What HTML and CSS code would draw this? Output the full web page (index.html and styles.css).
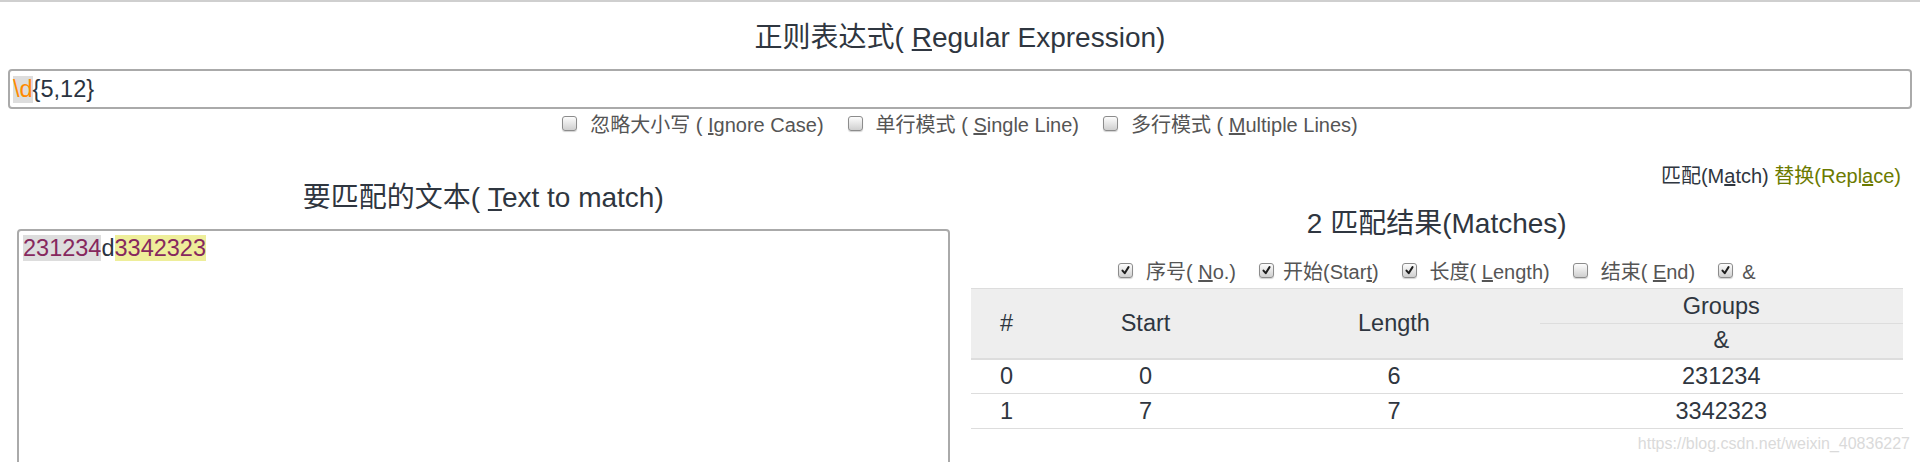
FILE: index.html
```html
<!DOCTYPE html>
<html lang="zh">
<head>
<meta charset="utf-8">
<title>正则表达式</title>
<link rel="stylesheet" href="styles.css">
</head>
<body>
<div class="page">
  <h1 class="title title-main">正则表达式( <u>R</u>egular Expression)</h1>
  <div class="regex-input"><span class="tok-esc">\d</span><span class="tok-q">{5,12}</span></div>
  <div class="options">
    <label class="opt"><span class="cb"></span><span>忽略大小写 ( <u>I</u>gnore Case)</span></label>
    <label class="opt"><span class="cb"></span><span>单行模式 ( <u>S</u>ingle Line)</span></label>
    <label class="opt"><span class="cb"></span><span>多行模式 ( <u>M</u>ultiple Lines)</span></label>
  </div>
  <div class="columns">
    <section class="col-left">
      <h2 class="title title-left">要匹配的文本( <u>T</u>ext to match)</h2>
      <div class="textbox"><span class="m m0">231234</span><span class="plain">d</span><span class="m m1">3342323</span></div>
    </section>
    <section class="col-right">
      <div class="modes"><span class="mode mode-match">匹配(M<u>a</u>tch)</span> <span class="mode mode-replace">替换(Repl<u>a</u>ce)</span></div>
      <h2 class="title title-right">2 匹配结果(Matches)</h2>
      <div class="options options-sm">
        <label class="opt"><span class="cb checked"><svg viewBox="0 0 15 15"><path d="M4 7.6 L6.6 10.6 L11 3.6"/></svg></span><span>序号( <u>N</u>o.)</span></label>
        <label class="opt opt-tight"><span class="cb checked"><svg viewBox="0 0 15 15"><path d="M4 7.6 L6.6 10.6 L11 3.6"/></svg></span><span>开始(Star<u>t</u>)</span></label>
        <label class="opt"><span class="cb checked"><svg viewBox="0 0 15 15"><path d="M4 7.6 L6.6 10.6 L11 3.6"/></svg></span><span>长度( <u>L</u>ength)</span></label>
        <label class="opt"><span class="cb"></span><span>结束( <u>E</u>nd)</span></label>
        <label class="opt opt-tight"><span class="cb checked"><svg viewBox="0 0 15 15"><path d="M4 7.6 L6.6 10.6 L11 3.6"/></svg></span><span>&amp;</span></label>
      </div>
      <table class="results">
        <colgroup>
          <col class="c-no"><col class="c-start"><col class="c-len"><col class="c-grp">
        </colgroup>
        <thead>
          <tr><th rowspan="2">#</th><th rowspan="2">Start</th><th rowspan="2">Length</th><th class="grp">Groups</th></tr>
          <tr><th class="amp">&amp;</th></tr>
        </thead>
        <tbody>
          <tr><td>0</td><td>0</td><td>6</td><td>231234</td></tr>
          <tr><td>1</td><td>7</td><td>7</td><td>3342323</td></tr>
        </tbody>
      </table>
    </section>
  </div>
  <div class="watermark">https://blog.csdn.net/weixin_40836227</div>
</div>
</body>
</html>
```

FILE: styles.css
```css
* { box-sizing: border-box; }
html, body { margin: 0; padding: 0; background: #fff; }
body {
  font-family: "Liberation Sans", Arial, "Noto Sans CJK SC", sans-serif;
  color: #333;
}
.page {
  position: relative;
  height: 462px;
  overflow: hidden;
  border-top: 2px solid #cfcfcf;
}
.title {
  margin: 0;
  font-size: 28px;
  font-weight: normal;
  line-height: 32px;
  text-align: center;
  color: #2f3640;
}
.title-main { margin: 20px 0 15px; }

.regex-input {
  margin: 0 8px;
  height: 40px;
  border: 2px solid #aaa;
  border-radius: 4px;
  padding: 0 3px;
  display: flex;
  align-items: center;
  font-size: 23.5px;
  color: #2a3340;
}
.tok-esc { color: #ff8a00; background: #ddd; }

.options {
  margin-top: 4px;
  display: flex;
  justify-content: center;
  gap: 24px;
  font-size: 20px;
  line-height: 24px;
  color: #555;
}
.opt { display: flex; align-items: center; gap: 13px; }
.cb {
  flex: 0 0 auto;
  position: relative;
  top: -2px;
  width: 15px;
  height: 15px;
  border: 1px solid #8c8c8c;
  border-radius: 3px;
  background: linear-gradient(#fdfdfd, #cfcfcf);
  box-shadow: 0 1px 1px rgba(0,0,0,0.18);
}
.cb svg { display: block; width: 13px; height: 13px; }
.cb svg path { fill: none; stroke: #1e1e1e; stroke-width: 2.3; stroke-linecap: round; stroke-linejoin: round; }

.columns {
  display: grid;
  grid-template-columns: 1fr 1fr;
  column-gap: 21px;
  padding: 0 17px;
}
.title-left { margin-top: 45px; }
.textbox {
  margin-top: 15px;
  height: 320px;
  border: 2px solid #aaa;
  border-radius: 4px;
  padding: 4px;
  font-size: 23.5px;
  line-height: 27px;
  color: #2a3340;
}
.m { color: #86285e; }
.m0 { background: #ddd; }
.m1 { background: #eeee9a; }

.modes {
  margin-top: 27px;
  padding-right: 2px;
  text-align: right;
  font-size: 20px;
  line-height: 24px;
}
.mode-match { color: #2f3640; }
.mode-replace { color: #6b7a00; }
.title-right { margin-top: 20px; }

.options-sm { margin-top: 20px; gap: 23px; }
.options-sm .opt { gap: 13px; }
.options-sm .opt-tight { gap: 9px; }

.results {
  margin-top: 4px;
  width: 100%;
  border-collapse: collapse;
  table-layout: fixed;
  font-size: 23.5px;
  color: #2f3640;
}
.c-no { width: 72px; }
.c-start { width: 206px; }
.c-len { width: 291px; }
.results th, .results td {
  padding: 0;
  text-align: center;
  font-weight: normal;
}
.results th {
  background: #eee;
  height: 35px;
}
.results thead tr:first-child th { border-top: 1px solid #ddd; }
.results thead tr:last-child th, .results th[rowspan] { border-bottom: 2px solid #ddd; }
.results th.grp { border-bottom: 1px solid #ddd; }
.results td {
  height: 35px;
  border-bottom: 1px solid #ddd;
}

.watermark {
  position: absolute;
  right: 10px;
  top: 432px;
  font-size: 16px;
  line-height: 20px;
  color: #dadada;
}
```
